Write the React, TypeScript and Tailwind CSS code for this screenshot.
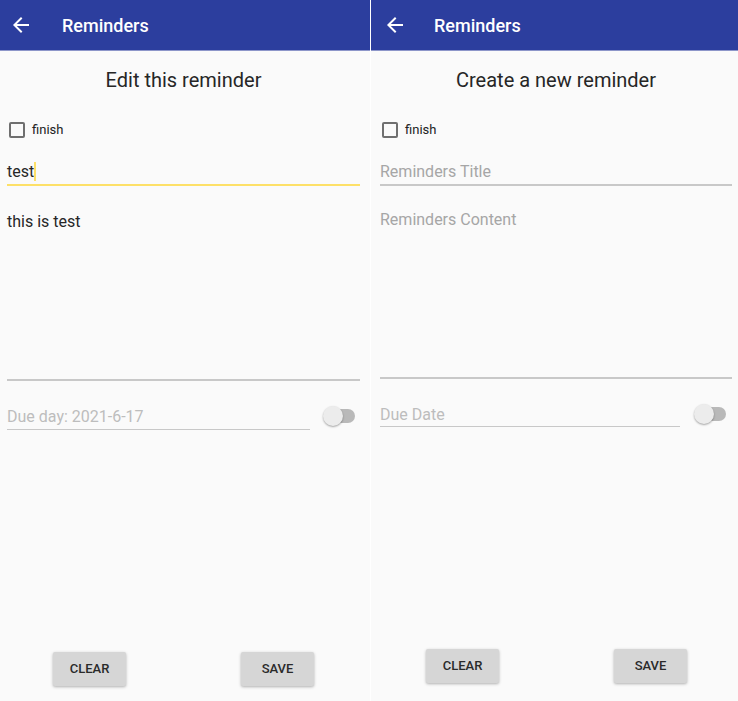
import React from "react";

function Header({ arrowX, textX }: { arrowX: number; textX: number }) {
  return (
    <div className="h-[51px] bg-[#2c3e9e] border-b border-[#8d96c9] flex items-center shrink-0 relative">
      <svg
        width="24"
        height="24"
        viewBox="0 0 24 24"
        className="absolute top-[13px]"
        style={{ left: arrowX }}
      >
        <path fill="#ffffff" d="M20 11H7.83l5.59-5.59L12 4l-8 8 8 8 1.41-1.41L7.83 13H20v-2z" />
      </svg>
      <span
        className="absolute top-[14px] text-white text-[18px] leading-[24px] font-medium"
        style={{ left: textX }}
      >
        Reminders
      </span>
    </div>
  );
}

function Switch() {
  return (
    <div className="relative w-[32px] h-[20px] shrink-0">
      <div className="absolute left-[6px] right-0 top-[3px] h-[14px] rounded-full bg-[#b9b9b9]" />
      <div className="absolute left-0 top-0 w-[20px] h-[20px] rounded-full bg-[#ececec] shadow-[0_1px_2px_rgba(0,0,0,0.35)]" />
    </div>
  );
}

function Panel({
  edit,
  width,
  arrowX,
  textX,
  padL,
  padR,
  shift,
  bottom,
  btnL,
  dueRightGap,
  switchMr,
  dueH,
}: {
  edit: boolean;
  width: number;
  arrowX: number;
  textX: number;
  padL: number;
  padR: number;
  shift: number;
  bottom: number;
  btnL: number;
  dueRightGap: number;
  switchMr: number;
  dueH: number;
}) {
  return (
    <div className="h-[701px] flex flex-col bg-[#fafafa] shrink-0" style={{ width }}>
      <Header arrowX={arrowX} textX={textX} />
      <div className="flex flex-col flex-1" style={{ paddingLeft: padL, paddingRight: padR }}>
        <div className="mt-[15px] text-center text-[20px] leading-[28px] text-[#262626]">
          {edit ? "Edit this reminder" : "Create a new reminder"}
        </div>
        <div className="mt-[24px] h-[24px] flex items-center gap-[7px] pl-[2px]">
          <div className="w-[16px] h-[16px] rounded-[2px] border-2 border-[#6f6f6f]" />
          <span className="text-[13px] text-[#222]">finish</span>
        </div>
        <div
          className={
            "mt-[18px] h-[26px] text-[16px] leading-[24px] " +
            (edit
              ? "border-b-2 border-[#fde068] text-[#262626]"
              : "border-b-2 border-[#c8c8c8] text-[#a6a6a6]")
          }
        >
          {edit ? (
            <span>
              test<span className="inline-block w-[2px] h-[19px] bg-[#fde068] align-middle -mt-[3px]" />
            </span>
          ) : (
            "Reminders Title"
          )}
        </div>
        <div
          className={
            "h-[195px] pt-[24px] text-[16px] leading-[24px] border-b-2 border-[#c8c8c8] " +
            (edit ? "text-[#262626]" : "text-[#a6a6a6]")
          }
          style={{ marginTop: shift }}
        >
          {edit ? "this is test" : "Reminders Content"}
        </div>
        <div className="mt-[24px] flex items-start">
          <div
            className="flex-1 border-b border-[#c8c8c8] text-[16px] leading-[24px] text-[#bdbdbd]"
            style={{ height: dueH }}
          >
            {edit ? "Due day: 2021-6-17" : "Due Date"}
          </div>
          <div className="pt-[1px]" style={{ marginLeft: dueRightGap, marginRight: switchMr }}>
            <Switch />
          </div>
        </div>
        <div className="flex-1" />
        <div className="flex gap-[115px]" style={{ paddingLeft: btnL - padL, marginBottom: bottom }}>
          <button className="w-[73px] h-[34px] rounded-[2px] bg-[#d6d6d6] shadow-[0_1px_3px_rgba(0,0,0,0.3)] text-[13px] font-medium text-[#2a2a2a]">
            CLEAR
          </button>
          <button className="w-[73px] h-[34px] rounded-[2px] bg-[#d6d6d6] shadow-[0_1px_3px_rgba(0,0,0,0.3)] text-[13px] font-medium text-[#2a2a2a]">
            SAVE
          </button>
        </div>
      </div>
    </div>
  );
}

export default function App() {
  return (
    <div
      className="w-[738px] h-[701px] flex bg-white overflow-hidden"
      style={{ fontFamily: "Roboto, 'Noto Sans', sans-serif" }}
    >
      <Panel
        edit
        width={370}
        arrowX={9}
        textX={62}
        padL={7}
        padR={10}
        shift={0}
        bottom={15}
        btnL={53}
        dueRightGap={13}
        switchMr={5}
        dueH={25}
      />
      <div className="w-px bg-white shrink-0" />
      <Panel
        edit={false}
        width={367}
        arrowX={12}
        textX={63}
        padL={9}
        padR={6}
        shift={-2}
        bottom={18}
        btnL={55}
        dueRightGap={14}
        switchMr={6}
        dueH={24}
      />
    </div>
  );
}
